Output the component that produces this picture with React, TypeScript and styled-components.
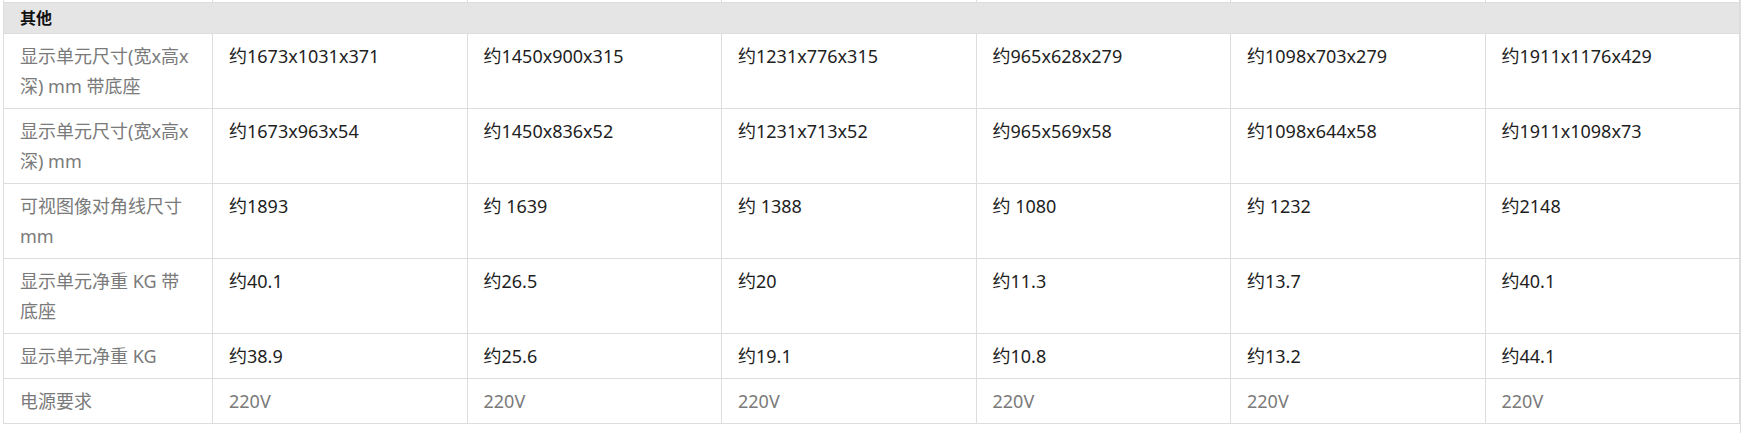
import React from 'react';
import styled, { createGlobalStyle } from 'styled-components';

const Global = createGlobalStyle`
body {
  margin: 0;
  background: #fff;
  font-family: "Noto Sans", "Noto Sans CJK SC", sans-serif;
}
`

const Page = styled.div`
margin-left: 3px;
width: 1737px;
height: 433px;
border-right: 1px solid #dedede;
overflow: hidden;
`

const Table = styled.table`
width: 100%;
border-collapse: collapse;
table-layout: fixed;
`

const Cell = styled.td<{ $label?: boolean; $muted?: boolean }>`
border: 1px solid #dddddd;
padding: 7px ${p => p.$label ? '22px' : '14px'} 7px 16px;
vertical-align: top;
font-size: 18px;
line-height: 30px;
color: ${p => (p.$label || p.$muted) ? '#7a7a7a' : '#1e1e1e'};
`

const CutCell = styled.td`
border: 1px solid #dddddd;
border-top: none;
height: 2px;
padding: 0;
`

const HeadCell = styled.td`
border: 1px solid #dddddd;
background: #e5e5e5;
padding: 0 16px;
height: 30px;
font-size: 16px;
font-weight: bold;
line-height: 30px;
color: #111;
`

const rows = [
  { label: '显示单元尺寸(宽x高x深) mm 带底座', values: ['约1673x1031x371', '约1450x900x315', '约1231x776x315', '约965x628x279', '约1098x703x279', '约1911x1176x429'] },
  { label: '显示单元尺寸(宽x高x深) mm', values: ['约1673x963x54', '约1450x836x52', '约1231x713x52', '约965x569x58', '约1098x644x58', '约1911x1098x73'] },
  { label: '可视图像对角线尺寸 mm', values: ['约1893', '约 1639', '约 1388', '约 1080', '约 1232', '约2148'] },
  { label: '显示单元净重 KG 带底座', values: ['约40.1', '约26.5', '约20', '约11.3', '约13.7', '约40.1'] },
  { label: '显示单元净重 KG', values: ['约38.9', '约25.6', '约19.1', '约10.8', '约13.2', '约44.1'] },
  { label: '电源要求', values: ['220V', '220V', '220V', '220V', '220V', '220V'], muted: true },
];

export default function App() {
  return (
    <Page>
      <Global />
      <Table>
        <colgroup>
          <col style={{ width: 209 }} />
          {rows[0].values.map((_, i) => <col key={i} />)}
        </colgroup>
        <tbody>
          <tr>
            {[0, 1, 2, 3, 4, 5, 6].map(i => <CutCell key={i} />)}
          </tr>
          <tr>
            <HeadCell colSpan={7}>其他</HeadCell>
          </tr>
          {rows.map(row => (
            <tr key={row.label}>
              <Cell $label>{row.label}</Cell>
              {row.values.map((v, i) => <Cell key={i} $muted={row.muted}>{v}</Cell>)}
            </tr>
          ))}
        </tbody>
      </Table>
    </Page>
  );
}
